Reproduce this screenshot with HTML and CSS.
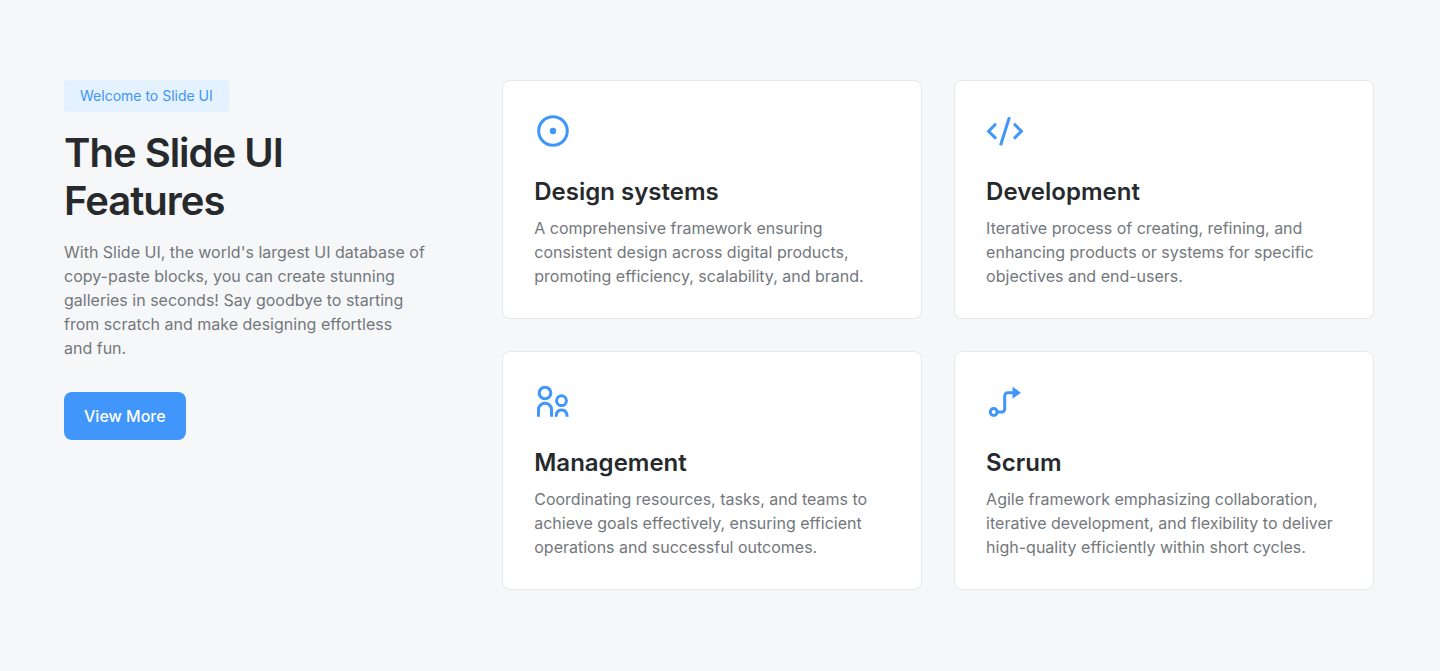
FILE: index.html
```html
<!DOCTYPE html>
<html lang="en">
<head>
<meta charset="utf-8">
<meta name="viewport" content="width=device-width, initial-scale=1">
<title>Slide UI Features</title>
<link rel="stylesheet" href="styles.css">
</head>
<body>
<main class="features">
  <section class="intro">
    <span class="badge">Welcome to Slide UI</span>
    <h1 class="title">The Slide UI Features</h1>
    <p class="text lead">With Slide UI, the world's largest UI database of copy-paste blocks, you can create stunning galleries in seconds! Say goodbye to starting from scratch and make designing effortless and&nbsp;fun.</p>
    <button class="button" type="button">View More</button>
  </section>
  <section class="cards">
    <article class="card">
      <svg class="icon" viewBox="0 0 38 38" aria-hidden="true"><circle cx="19" cy="19" r="14.3"/><circle class="solid" cx="19" cy="19" r="3.2"/></svg>
      <h2 class="card-title">Design systems</h2>
      <p class="text">A comprehensive framework ensuring consistent design across digital products, promoting efficiency, scalability, and brand.</p>
    </article>
    <article class="card">
      <svg class="icon" viewBox="0 0 38 38" aria-hidden="true"><path d="M10 11.800 2.600 19.200 10 26.600M28 11.800l7.400 7.400-7.400 7.400M23.400 5.200l-8.800 28"/></svg>
      <h2 class="card-title">Development</h2>
      <p class="text">Iterative process of creating, refining, and enhancing products or systems for specific objectives and end-users.</p>
    </article>
    <article class="card">
      <svg class="icon" viewBox="0 0 38 38" aria-hidden="true"><circle cx="11" cy="10" r="5.8"/><circle cx="27.500" cy="17.700" r="4.900"/><path d="M4.500 33.700v-7a6.500 6.500 0 0 1 13 0v7M22 33.700c.2-4.200 2-6.700 5.600-6.700s5.400 2.500 5.600 6.700"/></svg>
      <h2 class="card-title">Management</h2>
      <p class="text">Coordinating resources, tasks, and teams to achieve goals effectively, ensuring efficient operations and successful outcomes.</p>
    </article>
    <article class="card">
      <svg class="icon" viewBox="0 0 38 38" aria-hidden="true"><circle cx="7.700" cy="29" r="3.400"/><path d="M11.500 29H16a2.700 2.700 0 0 0 2.700-2.700V12.700a3 3 0 0 1 3-3H28"/><path class="solid" d="M26.500 3.700 35 9.700l-8.500 6z"/></svg>
      <h2 class="card-title">Scrum</h2>
      <p class="text">Agile framework emphasizing collaboration, iterative development, and flexibility to deliver high-quality efficiently within short cycles.</p>
    </article>
  </section>
</main>
</body>
</html>
```
FILE: styles.css
```css
* { box-sizing: border-box; }
body { margin: 0; background: #f6f7f9; color: #272a2d; font-family: Inter, "Liberation Sans", sans-serif; }
.features { display: grid; grid-template-columns: 5fr 12fr; gap: 75px; padding: 80px 66px 80px 64px; align-items: start; }
.badge { display: inline-block; padding: 6px 16px; border-radius: 4px; background: #e4f1fe; color: #3f95f8; font-size: 14px; line-height: 20px; }
.title { margin: 17px 0 15px; font-size: 40px; line-height: 48px; font-weight: 600; letter-spacing: -1px; }
.text { margin: 0; color: #73777c; font-size: 16px; line-height: 24px; }
.button { margin-top: 32px; padding: 12px 20px; border: 0; border-radius: 8px; background: #4096fa; color: #fff; font: inherit; font-weight: 500; font-size: 16px; line-height: 24px; }
.cards { display: grid; grid-template-columns: 1fr 1fr; gap: 32px; }
.card { padding: 31px 31px 30px; border: 1px solid #e7e8ea; border-radius: 8px; background: #fff; }
.icon { display: block; width: 38px; height: 38px; margin-bottom: 26px; fill: none; stroke: #4096fa; stroke-width: 3; }
.solid { fill: #4096fa; stroke: none; }
.card-title { margin: 0 0 8px; font-size: 24px; line-height: 32px; font-weight: 600; }

@media (max-width: 1000px) {
  .features { grid-template-columns: 1fr; gap: 48px; }
}

@media (max-width: 640px) {
  .features { padding: 40px 20px; }
  .cards { grid-template-columns: 1fr; }
}
```
